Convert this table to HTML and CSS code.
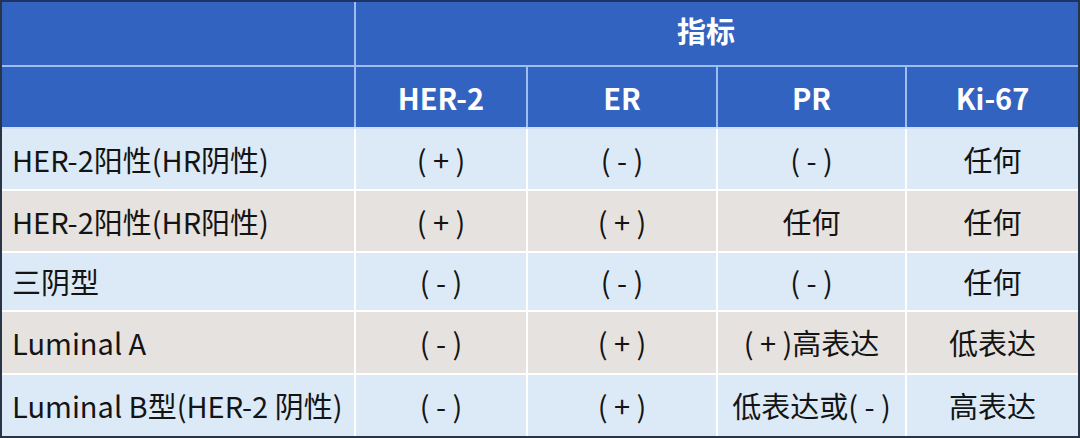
FILE: index.html
```html
<!DOCTYPE html>
<html lang="zh-CN">
<head>
<meta charset="utf-8">
<link rel="stylesheet" href="styles.css">
</head>
<body>
<div class="frame">
<table class="tbl">
  <colgroup>
    <col class="c1"><col class="c2"><col class="c3"><col class="c4"><col class="c5">
  </colgroup>
  <thead>
    <tr class="h1">
      <th class="blank"></th>
      <th class="group" colspan="4">指标</th>
    </tr>
    <tr class="h2">
      <th class="blank"></th>
      <th>HER-2</th><th>ER</th><th>PR</th><th>Ki-67</th>
    </tr>
  </thead>
  <tbody>
    <tr class="blue r1"><td class="name">HER-2阳性(HR阴性)</td><td>( + )</td><td>( - )</td><td>( - )</td><td>任何</td></tr>
    <tr class="gray r2"><td class="name">HER-2阳性(HR阳性)</td><td>( + )</td><td>( + )</td><td>任何</td><td>任何</td></tr>
    <tr class="blue r3"><td class="name">三阴型</td><td>( - )</td><td>( - )</td><td>( - )</td><td>任何</td></tr>
    <tr class="gray r4"><td class="name">Luminal A</td><td>( - )</td><td>( + )</td><td>( + )高表达</td><td>低表达</td></tr>
    <tr class="blue r5"><td class="name">Luminal B型(HER-2 阴性)</td><td>( - )</td><td>( + )</td><td>低表达或( - )</td><td>高表达</td></tr>
  </tbody>
</table>
</div>
</body>
</html>
```
FILE: styles.css
```css
html, body {
  margin: 0;
  padding: 0;
  background: #ffffff;
}
.frame {
  width: 1080px;
  height: 438px;
  box-sizing: border-box;
  border: 2px solid #2a3447;
  border-top-color: #1f3466;
  overflow: hidden;
  background: #ffffff;
}
.tbl {
  width: 1076px;
  border-collapse: collapse;
  table-layout: fixed;
  font-family: "Noto Sans CJK SC", "Noto Sans", sans-serif;
  font-size: 29px;
  color: #141414;
}
.c1 { width: 353px; }
.c2 { width: 172px; }
.c3 { width: 190px; }
.c4 { width: 189px; }
.c5 { width: 172px; }
.tbl th,
.tbl td {
  padding: 0;
  text-align: center;
  vertical-align: middle;
  line-height: 1;
}
.tbl th {
  background: #3263c0;
  color: #ffffff;
  font-weight: 700;
  font-size: 29px;
  border: 2px solid #9ebdf0;
}
.tbl th.group {
  padding-right: 22px;
  padding-bottom: 6px;
}
.tbl td {
  border: 2px solid #ffffff;
}
.tbl tr:first-child th { border-top: none; }
.tbl th:first-child,
.tbl td:first-child { border-left: none; }
.tbl th:last-child,
.tbl td:last-child { border-right: none; }
.tbl tbody tr:last-child td { border-bottom: none; }
.tbl thead tr.h2 th { border-bottom-color: #cfe0f5; }
.h1 th { height: 57px; }
.h2 th { height: 60px; }
.r1 td { height: 60px; }
.r2 td { height: 60px; }
.r3 td { height: 57px; }
.r4 td { height: 61px; }
.r5 td { height: 61px; }
.blue td { background: #dceaf7; }
.gray td { background: #e6e2df; }
.tbl td.name {
  text-align: left;
  padding-left: 10px;
}
```
